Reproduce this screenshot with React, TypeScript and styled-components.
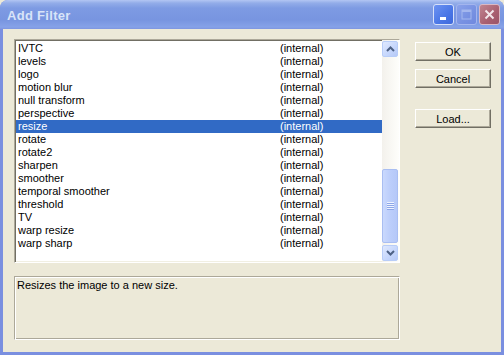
import React from 'react'
import styled, { createGlobalStyle } from 'styled-components'

const GlobalStyle = createGlobalStyle`
  html, body {
    margin: 0;
    padding: 0;
    background: #ece9d8;
  }
  body {
    font-family: 'Liberation Sans', Arial, sans-serif;
    font-size: 11px;
  }
`

const Window = styled.div`
  width: 504px;
  height: 355px;
  display: flex;
  flex-direction: column;
  box-sizing: border-box;
  background: #7a8fe0;
  border-radius: 8px 8px 0 0;
  overflow: hidden;
`

const TitleBar = styled.div`
  height: 29px;
  flex: none;
  display: flex;
  align-items: center;
  padding: 0 4px 0 7px;
  background: linear-gradient(
    to bottom,
    #b3c6f3 0px,
    #93ade9 3px,
    #7e9be3 8px,
    #7895e0 20px,
    #86a2e8 27px,
    #7e95e0 29px
  );
`

const Title = styled.div`
  flex: 1;
  color: #d8e4f8;
  font-family: 'Liberation Sans', Arial, sans-serif;
  font-weight: bold;
  font-size: 13px;
  letter-spacing: 0.3px;
  padding-top: 1px;
`

const CaptionButtons = styled.div`
  display: flex;
  gap: 2px;
  align-items: center;
`

const CaptionButton = styled.div<{ kind: 'min' | 'max' | 'close' }>`
  width: 21px;
  height: 21px;
  box-sizing: border-box;
  border-radius: 3px;
  border: 1px solid ${({ kind }) => (kind === 'close' ? '#d9b8c4' : kind === 'max' ? '#a3b5ee' : '#d6e0fa')};
  display: flex;
  align-items: center;
  justify-content: center;
  background: ${({ kind }) =>
    kind === 'close'
      ? 'linear-gradient(135deg, #c08590, #a85f70 60%, #9b5468)'
      : kind === 'max'
      ? 'linear-gradient(135deg, #8aa2ea, #7791e2 60%, #7089df)'
      : 'linear-gradient(135deg, #6d93f2, #4a76e6 60%, #3f69dc)'};
`

const Body = styled.div`
  flex: 1;
  display: flex;
  margin: 0 3px 3px 3px;
  background: #ece9d8;
  padding: 10px 10px 12px 11px;
  gap: 15px;
`

const LeftColumn = styled.div`
  width: 386px;
  display: flex;
  flex-direction: column;
  gap: 13px;
`

const ListBox = styled.div`
  height: 224px;
  box-sizing: border-box;
  display: flex;
  background: #fff;
  border: 1px solid;
  border-color: #aca899 #fff #fff #aca899;
  box-shadow: inset 1px 1px 0 #716f64, inset -1px -1px 0 #f1efe2;
`

const Rows = styled.div`
  flex: 1;
  padding-top: 2px;
  padding-left: 1px;
`

const Row = styled.div<{ selected?: boolean }>`
  height: 13px;
  line-height: 13px;
  display: grid;
  grid-template-columns: 262px 1fr;
  padding-left: 2px;
  color: ${({ selected }) => (selected ? '#fff' : '#000')};
  background: ${({ selected }) => (selected ? '#316ac5' : 'transparent')};
  white-space: nowrap;
`

const ScrollBar = styled.div`
  width: 17px;
  display: flex;
  flex-direction: column;
  padding: 1px 0;
  box-sizing: border-box;
  background: linear-gradient(to right, #f3f1ec, #fefefb);
`

const ArrowButton = styled.div`
  width: 16px;
  height: 16px;
  box-sizing: border-box;
  border: 1px solid #b8cdf8;
  border-radius: 2px;
  background: linear-gradient(135deg, #e0e9fe, #c5d6fc 60%, #b6c9f7);
  display: flex;
  align-items: center;
  justify-content: center;
  flex: none;
`

const Track = styled.div`
  flex: 1;
  display: flex;
  flex-direction: column;
`

const Thumb = styled.div<{ offset: number; size: number }>`
  margin-top: ${({ offset }) => offset}px;
  height: ${({ size }) => size}px;
  width: 16px;
  box-sizing: border-box;
  border: 1px solid #a9bef2;
  border-radius: 2px;
  background: linear-gradient(to right, #cad9fd, #bccefb 50%, #b5c8f8);
  display: flex;
  align-items: center;
  justify-content: center;
`

const Description = styled.div`
  height: 64px;
  box-sizing: border-box;
  border: 1px solid;
  border-color: #aca899 #fff #fff #aca899;
  box-shadow: inset 1px 1px 0 #fff, inset -1px -1px 0 #aca899;
  padding: 2px 2px;
  line-height: 13px;
  color: #000;
`

const ButtonColumn = styled.div`
  display: flex;
  flex-direction: column;
  padding-top: 3px;
`

const PushButton = styled.div<{ gapBefore?: number }>`
  width: 76px;
  height: 19px;
  box-sizing: border-box;
  margin-top: ${({ gapBefore }) => gapBefore ?? 0}px;
  background: #ece9d8;
  border: 1px solid;
  border-color: #fff #716f64 #716f64 #fff;
  box-shadow: inset -1px -1px 0 #aca899;
  display: flex;
  align-items: center;
  justify-content: center;
  color: #000;
`

const filters = [
  'IVTC',
  'levels',
  'logo',
  'motion blur',
  'null transform',
  'perspective',
  'resize',
  'rotate',
  'rotate2',
  'sharpen',
  'smoother',
  'temporal smoother',
  'threshold',
  'TV',
  'warp resize',
  'warp sharp',
]

const Chevron = ({ up }: { up?: boolean }) => (
  <svg width="9" height="6" viewBox="0 0 9 6">
    <path
      d={up ? 'M1 5 L4.5 1.5 L8 5' : 'M1 1 L4.5 4.5 L8 1'}
      fill="none"
      stroke="#4d6185"
      strokeWidth="2"
    />
  </svg>
)

export default function App() {
  return (
    <>
      <GlobalStyle />
      <Window>
        <TitleBar>
          <Title>Add Filter</Title>
          <CaptionButtons>
            <CaptionButton kind="min">
              <svg width="13" height="13" viewBox="0 0 13 13">
                <rect x="3" y="9" width="6" height="3" fill="#fff" />
              </svg>
            </CaptionButton>
            <CaptionButton kind="max">
              <svg width="13" height="13" viewBox="0 0 13 13">
                <rect x="2" y="2" width="9" height="9" fill="none" stroke="#a4b7ee" strokeWidth="1" />
                <rect x="2" y="2" width="9" height="2" fill="#a4b7ee" />
              </svg>
            </CaptionButton>
            <CaptionButton kind="close">
              <svg width="13" height="13" viewBox="0 0 13 13">
                <path d="M2.5 2.5 L10.5 10.5 M10.5 2.5 L2.5 10.5" stroke="#f2e6ea" strokeWidth="2" />
              </svg>
            </CaptionButton>
          </CaptionButtons>
        </TitleBar>
        <Body>
          <LeftColumn>
            <ListBox>
              <Rows>
                {filters.map((name) => (
                  <Row key={name} selected={name === 'resize'}>
                    <span>{name}</span>
                    <span>(internal)</span>
                  </Row>
                ))}
              </Rows>
              <ScrollBar>
                <ArrowButton>
                  <Chevron up />
                </ArrowButton>
                <Track>
                  <Thumb offset={112} size={74}>
                    <svg width="7" height="8" viewBox="0 0 7 8">
                      <path d="M0 0.5 H7 M0 2.5 H7 M0 4.5 H7 M0 6.5 H7" stroke="#eef3ff" strokeWidth="1" />
                      <path d="M0 1.5 H7 M0 3.5 H7 M0 5.5 H7 M0 7.5 H7" stroke="#8ca6e8" strokeWidth="1" />
                    </svg>
                  </Thumb>
                </Track>
                <ArrowButton>
                  <Chevron />
                </ArrowButton>
              </ScrollBar>
            </ListBox>
            <Description>Resizes the image to a new size.</Description>
          </LeftColumn>
          <ButtonColumn>
            <PushButton>OK</PushButton>
            <PushButton gapBefore={8}>Cancel</PushButton>
            <PushButton gapBefore={21}>Load...</PushButton>
          </ButtonColumn>
        </Body>
      </Window>
    </>
  )
}
